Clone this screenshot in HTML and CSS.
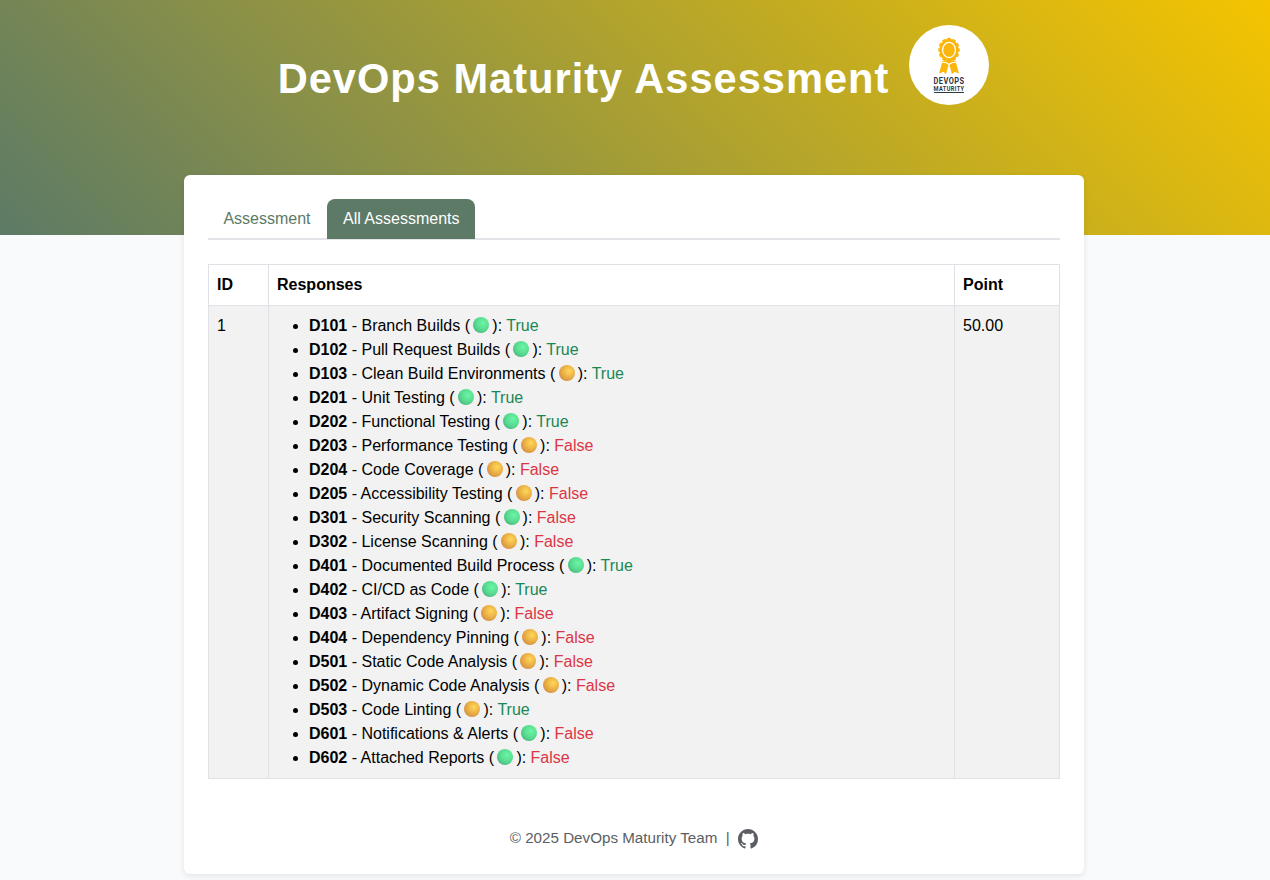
FILE: index.html
```html
<!DOCTYPE html>
<html lang="en">
<head>
<meta charset="utf-8">
<title>DevOps Maturity Assessment</title>
<link rel="stylesheet" href="styles.css">
</head>
<body>
<header class="hero">
  <h1 class="hero-title">DevOps Maturity Assessment</h1>
  <svg class="logo" viewBox="0 0 80 80" role="img" aria-label="DevOps Maturity">
    <circle cx="40" cy="40" r="40" fill="#fff"/>
    <path d="M33.500 36L30 48.500l4.600-1.800 2.400 2.600L40 38.500l3 10.800 2.400-2.600 4.600 1.800L46.500 36z" fill="#fab60b"/>
    <ellipse cx="40" cy="25" rx="9.600" ry="11.200" fill="#fab60b"/>
    <ellipse cx="40" cy="25" rx="9.600" ry="11.200" fill="none" stroke="#fab60b" stroke-width="2.200" pathLength="96" stroke-dasharray="5 3" stroke-dashoffset="2.500"/>
    <ellipse cx="40" cy="25" rx="6.400" ry="7.600" fill="#fab60b" stroke="#fff" stroke-width="1.300"/>
    <path d="M32.500 37.500Q36.500 36.500 40 39.500 43.500 36.500 47.500 37.500" fill="none" stroke="#fff" stroke-width="1.200"/>
    <g fill="#30373f">
      <text class="logo-name" transform="translate(24.600 59) scale(.86 1)" textLength="35.500" lengthAdjust="spacing">DEVOPS</text>
      <text class="logo-sub" transform="translate(24.600 65.500) scale(.86 1)" textLength="35.500" lengthAdjust="spacing">MATURITY</text>
    </g>
    <path d="M25 67.500h30" stroke="#30373f" stroke-width="1"/>
  </svg>
</header>
<main class="card">
  <nav class="tabs">
    <a class="tab">Assessment</a>
    <a class="tab tab-active">All Assessments</a>
  </nav>
  <table class="results">
    <colgroup><col class="col-id"><col class="col-responses"><col class="col-point"></colgroup>
    <thead><tr><th>ID</th><th>Responses</th><th>Point</th></tr></thead>
    <tbody><tr>
      <td>1</td>
      <td>
        <ul class="responses">
          <li><b>D101</b> - Branch Builds (<i class="ball green"></i>): <span class="yes">True</span></li>
          <li><b>D102</b> - Pull Request Builds (<i class="ball green"></i>): <span class="yes">True</span></li>
          <li><b>D103</b> - Clean Build Environments (<i class="ball gold"></i>): <span class="yes">True</span></li>
          <li><b>D201</b> - Unit Testing (<i class="ball green"></i>): <span class="yes">True</span></li>
          <li><b>D202</b> - Functional Testing (<i class="ball green"></i>): <span class="yes">True</span></li>
          <li><b>D203</b> - Performance Testing (<i class="ball gold"></i>): <span class="no">False</span></li>
          <li><b>D204</b> - Code Coverage (<i class="ball gold"></i>): <span class="no">False</span></li>
          <li><b>D205</b> - Accessibility Testing (<i class="ball gold"></i>): <span class="no">False</span></li>
          <li><b>D301</b> - Security Scanning (<i class="ball green"></i>): <span class="no">False</span></li>
          <li><b>D302</b> - License Scanning (<i class="ball gold"></i>): <span class="no">False</span></li>
          <li><b>D401</b> - Documented Build Process (<i class="ball green"></i>): <span class="yes">True</span></li>
          <li><b>D402</b> - CI/CD as Code (<i class="ball green"></i>): <span class="yes">True</span></li>
          <li><b>D403</b> - Artifact Signing (<i class="ball gold"></i>): <span class="no">False</span></li>
          <li><b>D404</b> - Dependency Pinning (<i class="ball gold"></i>): <span class="no">False</span></li>
          <li><b>D501</b> - Static Code Analysis (<i class="ball gold"></i>): <span class="no">False</span></li>
          <li><b>D502</b> - Dynamic Code Analysis (<i class="ball gold"></i>): <span class="no">False</span></li>
          <li><b>D503</b> - Code Linting (<i class="ball gold"></i>): <span class="yes">True</span></li>
          <li><b>D601</b> - Notifications &amp; Alerts (<i class="ball green"></i>): <span class="no">False</span></li>
          <li><b>D602</b> - Attached Reports (<i class="ball green"></i>): <span class="no">False</span></li>
        </ul>
      </td>
      <td>50.00</td>
    </tr></tbody>
  </table>
  <footer class="footer">
    <span>© 2025 DevOps Maturity Team</span><span class="divider">|</span>
    <svg class="github" viewBox="0 0 16 16" aria-label="GitHub"><path fill="currentColor" d="M8 0C3.580 0 0 3.580 0 8c0 3.540 2.290 6.530 5.470 7.590.4.070.55-.17.55-.38 0-.19-.01-.82-.01-1.490-2.010.37-2.530-.49-2.690-.94-.09-.23-.48-.94-.82-1.130-.28-.15-.68-.52-.01-.53.63-.01 1.080.58 1.230.82.72 1.210 1.870.87 2.330.66.070-.52.28-.87.51-1.070-1.780-.2-3.640-.89-3.640-3.950 0-.87.31-1.590.82-2.150-.08-.2-.36-1.020.08-2.120 0 0 .67-.21 2.200.82.64-.18 1.320-.27 2-.27s1.360.09 2 .27c1.530-1.040 2.200-.82 2.200-.82.44 1.100.16 1.920.08 2.120.51.56.82 1.270.82 2.150 0 3.070-1.870 3.750-3.650 3.950.29.25.54.73.54 1.480 0 1.070-.01 1.930-.01 2.200 0 .21.15.46.55.38A8.010 8.010 0 0 0 16 8c0-4.420-3.580-8-8-8z"/></svg>
  </footer>
</main>
</body>
</html>
```
FILE: styles.css
```css
* { box-sizing: border-box; }
body {
  margin: 0;
  height: 880px;
  overflow: hidden;
  background: #f8fafc;
  color: #000;
  font: 16px/24px "Liberation Sans", Arial, sans-serif;
}
.hero {
  display: flex;
  justify-content: center;
  align-items: flex-start;
  gap: 20px;
  height: 235px;
  padding: 25px 3px 0 0;
  background: linear-gradient(45deg, #5c7a66, #f5c400);
}
.hero-title {
  margin: 29px 0 0;
  color: #fff;
  font-size: 41.6px;
  line-height: 50px;
  letter-spacing: 1px;
  white-space: nowrap;
}
.logo { flex: none; width: 80px; height: 80px; }
.logo-name { font: bold 8.6px Roboto, sans-serif; }
.logo-sub { font: bold 6.6px Roboto, sans-serif; }
.card {
  position: relative;
  width: 900px;
  height: 699px;
  margin: -60px 0 0 184px;
  padding: 24px;
  background: #fff;
  border-radius: 6px;
  box-shadow: 0 2px 6px rgba(0, 0, 0, .09);
}
.tabs {
  display: flex;
  height: 41px;
  margin-bottom: 24px;
  border-bottom: 2px solid #e3e4e8;
}
.tab {
  height: 40px;
  padding: 8px 16px 8px 15px;
  color: #5c7a66;
  border-radius: 8px 8px 0 0;
}
.tab:first-child { width: 119px; padding-left: 15.4px; padding-right: 0; }
.tab-active { width: 148px; padding: 8px 0 8px 16px; background: #5c7a66; color: #fff; white-space: nowrap; }
.results {
  width: 852px;
  table-layout: fixed;
  border-collapse: collapse;
}
.col-id { width: 60px; }
.col-responses { width: 686px; }
.results th, .results td {
  padding: 8px;
  border: 1px solid #dee2e6;
  text-align: left;
  vertical-align: top;
}
.results td { background: #f2f2f2; }
.responses { margin: 0; padding-left: 32px; }
.ball {
  display: inline-block;
  width: 16px;
  height: 16px;
  margin: 0 3px 0 3.4px;
  border-radius: 50%;
  vertical-align: -2px;
}
.green { background: radial-gradient(circle at 62% 38%, #6bf6a5, #57d990 50%, #43a17c 95%); }
.gold { background: radial-gradient(circle at 62% 38%, #ffd857, #e8ab44 50%, #c47b4b 95%); }
.yes { color: #198754; }
.no { color: #dc3545; }
.footer {
  display: flex;
  justify-content: center;
  margin-top: 47px;
  color: #5b5e63;
  font-size: 15.2px;
}
.divider { margin: 0 8.500px; }
.github { width: 20px; height: 20px; margin-top: 3px; }
```
